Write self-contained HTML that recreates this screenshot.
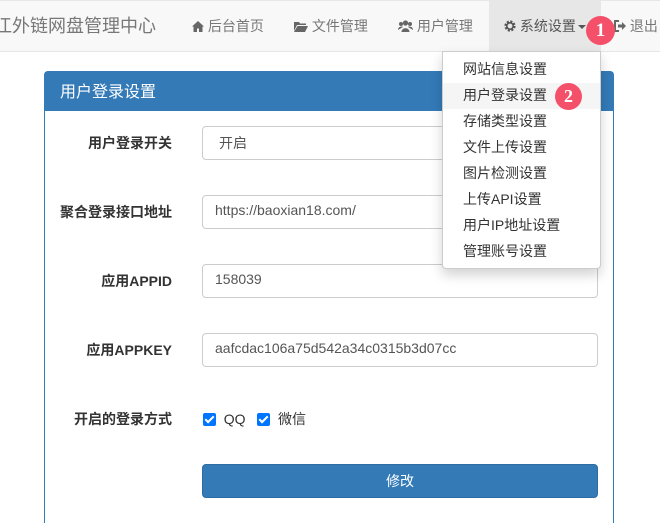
<!DOCTYPE html>
<html style="height:523px;overflow:hidden"><head><meta charset="utf-8"><style>
*{box-sizing:border-box;margin:0;padding:0}
body{width:660px;height:523px;overflow:hidden;background:#fff;font-family:"Liberation Sans","Noto Sans CJK SC",sans-serif;font-size:14px;color:#333;position:relative}
.nav{position:absolute;left:0;top:0;width:660px;height:52px;background:#f8f8f8;border-top:1px solid #e7e7e7;border-bottom:1px solid #e7e7e7}
.brand{position:absolute;left:-6px;top:11px;font-size:18px;color:#777;white-space:nowrap}
.ni{position:absolute;top:15px;color:#777;font-size:14px;white-space:nowrap}
.act{position:absolute;left:489px;top:0;width:112px;height:50px;background:#e7e7e7}
.panel{position:absolute;left:44px;top:71px;width:570px;height:452px;border:1px solid #337ab7;border-bottom:none;border-radius:4px 4px 0 0}
.ph{height:39px;background:#337ab7;color:#fff;font-size:16px;padding:6px 15px}
.lbl{position:absolute;right:488px;font-weight:bold;font-size:14px;color:#333;white-space:nowrap}
.inp{position:absolute;left:202px;width:396px;height:34px;border:1px solid #ccc;border-radius:4px;padding:6px 12px;font-size:14px;color:#555}
.btn{position:absolute;left:202px;top:464px;width:396px;height:34px;background:#337ab7;border-radius:4px;color:#fff;text-align:center;line-height:32px;border:1px solid #2e6da4}
.cb{display:inline-block;width:13px;height:13px;background:#0075ff;border-radius:2px;vertical-align:-2px;position:relative}
.cb:after{content:"";position:absolute;left:4px;top:1px;width:3px;height:7px;border:solid #fff;border-width:0 2px 2px 0;transform:rotate(45deg)}
.dd{position:absolute;left:442px;top:51px;width:159px;height:218px;background:#fff;border:1px solid #ccc;border-radius:0 0 4px 4px;box-shadow:0 6px 12px rgba(0,0,0,.175);padding-top:5px}
.dd div{height:26px;line-height:24px;padding-left:20px;color:#333;font-size:14px}
.dd .h{background:#f5f5f5}
.badge{position:absolute;border-radius:50%;background:#f5506a;color:#fff;font-family:"Liberation Serif",serif;font-weight:bold;text-align:center}
</style></head><body>
<div class="nav">
<div class="act"></div>
<div class="brand">江外链网盘管理中心</div>
<div class="ni" style="left:192px"><svg width="12" height="11" viewBox="0 0 12 11" style="vertical-align:-1px"><path d="M6 0L0 5.5h1.5V11h3.5V7.5h2V11h3.5V5.5H12z" fill="#666"/></svg> 后台首页</div>
<div class="ni" style="left:294px"><svg width="14" height="11" viewBox="0 0 14 11" style="vertical-align:-1px"><path d="M0 1h5l1 1.5h6V4H3L0 10z M3.5 5H14l-3 6H0z" fill="#666"/></svg> 文件管理</div>
<div class="ni" style="left:398px"><svg width="15" height="12" viewBox="0 0 15 12" style="vertical-align:-1px"><circle cx="7.5" cy="3" r="2.6" fill="#666"/><circle cx="3" cy="4" r="2" fill="#666"/><circle cx="12" cy="4" r="2" fill="#666"/><path d="M3.5 12c0-5 8-5 8 0z M0 10c0-3.5 4-4 5-3 M15 10c0-3.5-4-4-5-3" fill="#666"/></svg> 用户管理</div>
<div class="ni" style="left:504px;color:#555"><svg width="12" height="12" viewBox="0 0 12 12" style="vertical-align:-1px"><circle cx="6" cy="6" r="4.3" fill="none" stroke="#555" stroke-width="2.6" stroke-dasharray="2 1.4"/><circle cx="6" cy="6" r="3.2" fill="none" stroke="#555" stroke-width="1.6"/></svg> 系统设置<span style="display:inline-block;border-top:4px solid #555;border-left:4px solid transparent;border-right:4px solid transparent;vertical-align:2px;margin-left:2px"></span></div>
<div class="ni" style="left:614px"><svg width="12" height="12" viewBox="0 0 12 12" style="vertical-align:-1px"><path d="M5 1H1v10h4" fill="none" stroke="#666" stroke-width="2"/><path d="M4 4.5h4V2l4 4-4 4V7.5H4z" fill="#666"/></svg> 退出</div>
</div>
<div class="panel"><div class="ph">用户登录设置</div></div>
<div class="lbl" style="top:133px">用户登录开关</div>
<div class="inp" style="top:126px;padding-left:16px">开启</div>
<div class="lbl" style="top:202px">聚合登录接口地址</div>
<div class="inp" style="top:195px">https://baoxian18.com/</div>
<div class="lbl" style="top:271px">应用APPID</div>
<div class="inp" style="top:264px">158039</div>
<div class="lbl" style="top:340px">应用APPKEY</div>
<div class="inp" style="top:333px">aafcdac106a75d542a34c0315b3d07cc</div>
<div class="lbl" style="top:409px">开启的登录方式</div>
<div style="position:absolute;left:203px;top:409px;font-size:14px;color:#333"><span class="cb"></span>&nbsp; QQ &nbsp;&nbsp;<span class="cb"></span>&nbsp; 微信</div>
<div class="btn">修改</div>
<div class="dd">
<div>网站信息设置</div><div class="h">用户登录设置</div><div>存储类型设置</div><div>文件上传设置</div><div>图片检测设置</div><div>上传API设置</div><div>用户IP地址设置</div><div>管理账号设置</div>
</div>
<div class="badge" style="left:586px;top:16px;width:29px;height:29px;line-height:29px;font-size:19px">1</div>
<div class="badge" style="left:555px;top:83px;width:27px;height:27px;line-height:27px;font-size:18px">2</div>
</body></html>
